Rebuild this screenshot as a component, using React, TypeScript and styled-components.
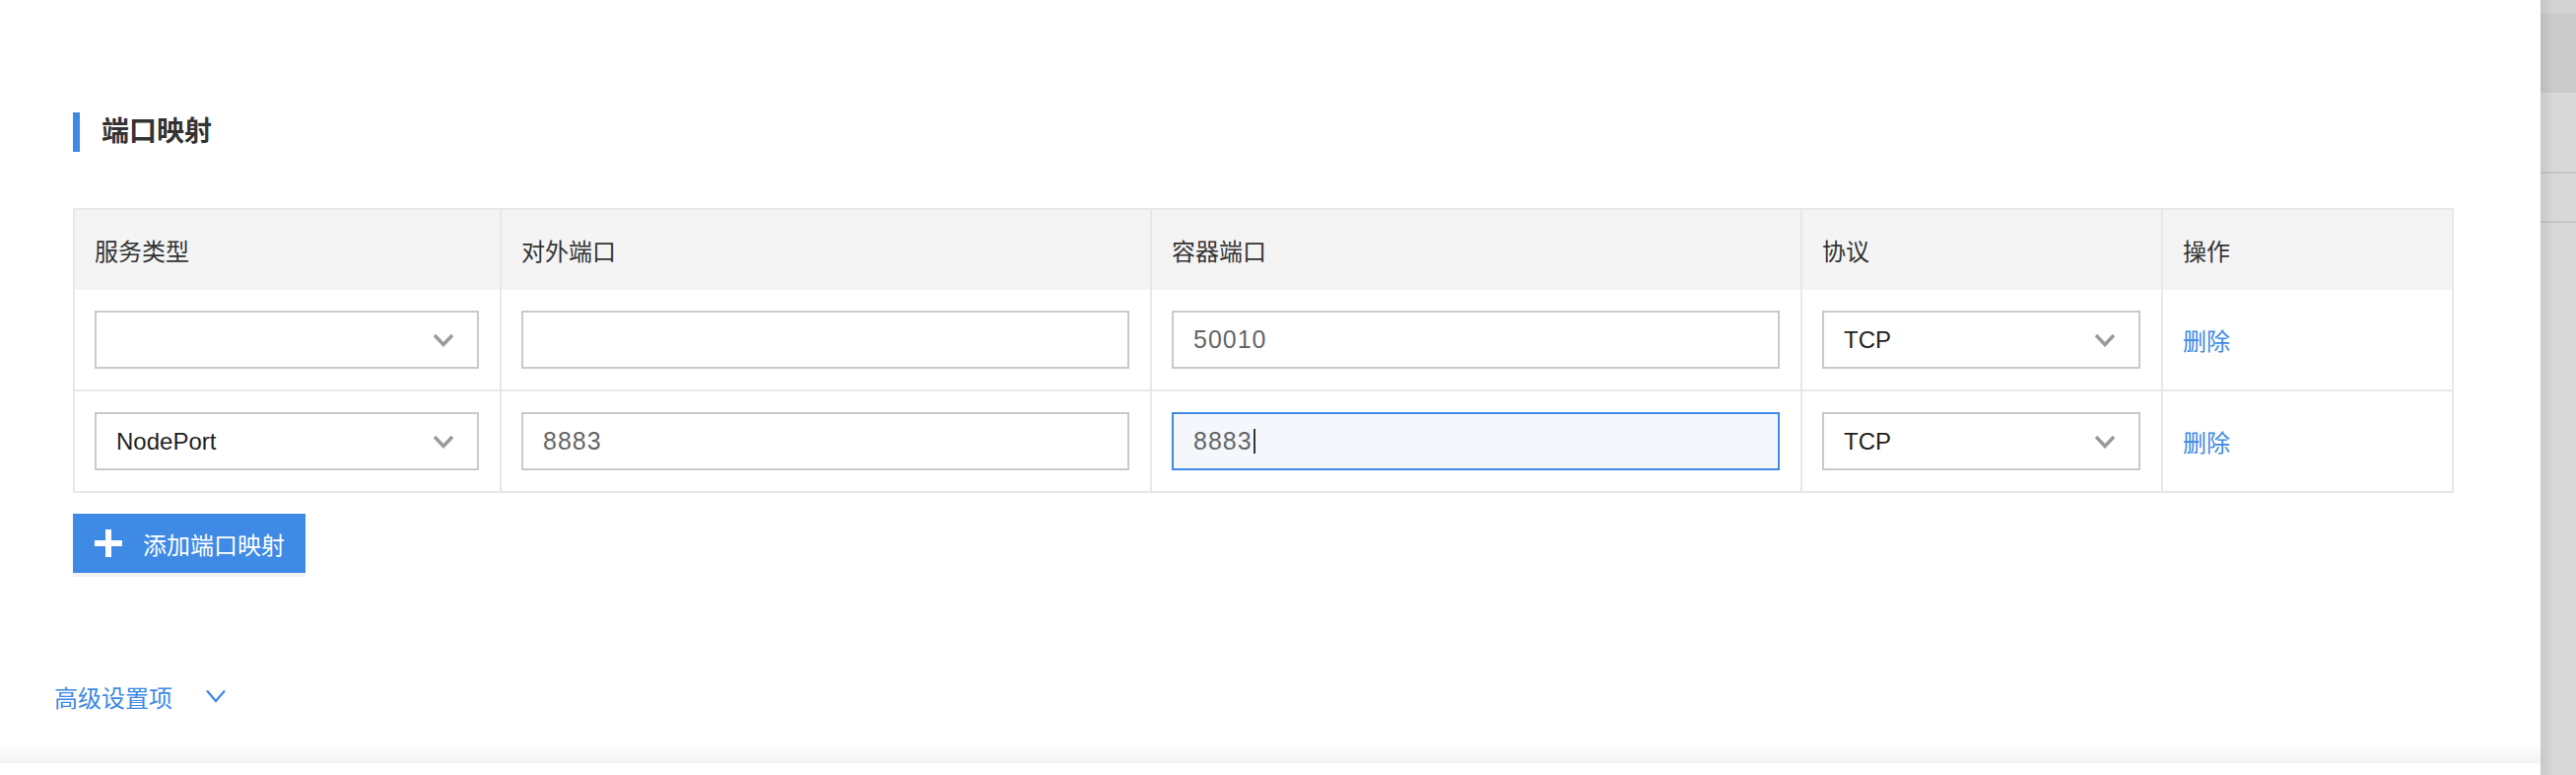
import React from 'react'
import styled, { createGlobalStyle } from 'styled-components'

const BLUE = '#3e8ae5'

const GlobalStyle = createGlobalStyle`
    html, body {
        margin: 0;
        padding: 0;
        background: #fff;
    }
    body {
        font-family: "Liberation Sans", "Noto Sans CJK SC", sans-serif;
        color: #333;
    }
`

const Screen = styled.div`
    display: flex;
    width: 2614px;
    height: 786px;
    overflow: hidden;
    background: #fff;
`

const Panel = styled.div`
    flex: 1;
    height: 774px;
    padding-top: 114px;
    box-sizing: border-box;
    display: flex;
    flex-direction: column;
    /* soft shadow at the bottom edge of the form */
    background: linear-gradient(to bottom, #fff 0, #fff 753px, #f3f3f3 774px);
`

const Section = styled.div`
    padding: 0 88px 0 74px;
`

const TitleRow = styled.div`
    display: flex;
    align-items: center;
    height: 40px;
`

const TitleBar = styled.span`
    width: 7px;
    height: 40px;
    background: ${BLUE};
`

const Title = styled.h2`
    margin: 0 0 0 22px;
    font-size: 28px;
    font-weight: 700;
    color: #333;
    line-height: 40px;
`

const Table = styled.div`
    margin-top: 57px;
    border: 2px solid #e8e8e8;
`

const Row = styled.div<{ $head?: boolean, $last?: boolean }>`
    display: grid;
    grid-template-columns: 431px 660px 660px 366px 1fr;
    background: ${props => props.$head ? '#f4f4f4' : '#fff'};
    border-bottom: ${props => props.$head || props.$last ? 'none' : '2px solid #e8e8e8'};
`

const Cell = styled.div<{ $head?: boolean }>`
    display: flex;
    align-items: center;
    height: ${props => props.$head ? '81px' : '101px'};
    padding: 0 21px 0 20px;
    box-sizing: border-box;
    font-size: 24px;
    color: #333;

    & + & {
        border-left: 2px solid #e8e8e8;
    }
`

const Field = styled.div<{ $focused?: boolean, $select?: boolean }>`
    display: flex;
    align-items: center;
    width: 100%;
    height: 59px;
    box-sizing: border-box;
    padding: ${props => props.$select ? '0 23px 0 20px' : '0 20px'};
    border: 2px solid ${props => props.$focused ? BLUE : '#c9c9c9'};
    background: ${props => props.$focused ? '#f4f8fc' : '#fff'};
    font-size: ${props => props.$select ? '24px' : '25px'};
    letter-spacing: ${props => props.$select ? '0' : '1px'};
    color: ${props => props.$select ? '#1f1f1f' : '#666'};
`

const Caret = styled.span`
    width: 2px;
    height: 25px;
    margin-left: 1px;
    background: #333;
`

const SelectArrow = styled.svg`
    margin-left: auto;
    flex: none;
`

const DeleteLink = styled.a`
    font-size: 24px;
    color: #3d89e4;
    cursor: pointer;
`

const AddButton = styled.button`
    margin-top: 21px;
    display: flex;
    align-items: center;
    gap: 21px;
    width: 236px;
    height: 60px;
    padding: 0 0 0 22px;
    border: none;
    background: ${BLUE};
    box-shadow: 0 4px 0 #f2f2f2;
    color: #fff;
    font-family: inherit;
    font-size: 24px;
    cursor: pointer;
`

const Advanced = styled.div`
    display: flex;
    align-items: center;
    gap: 34px;
    height: 34px;
    margin-top: 108px;
    padding-left: 55px;
    font-size: 24px;
    color: #3d89e4;
`

const SideStrip = styled.div`
    position: relative;
    width: 36px;
    height: 786px;
    display: flex;
    flex-direction: column;

    &::after {
        content: '';
        position: absolute;
        top: 0;
        bottom: 0;
        left: 0;
        width: 14px;
        background: linear-gradient(to right, rgba(0, 0, 0, 0.07), rgba(0, 0, 0, 0));
    }
`

const Band = styled.div<{ $h?: number, $tone: string }>`
    flex: ${props => props.$h ? `0 0 ${props.$h}px` : '1'};
    background: ${props => props.$tone};
`

const Chevron = () => (
    <SelectArrow width="22" height="14" viewBox="0 0 22 14">
        <path d="M2 2 L11 11.5 L20 2" fill="none" stroke="#9a9a9a" strokeWidth="3.5" />
    </SelectArrow>
)

const PlusIcon = () => (
    <svg width="28" height="28" viewBox="0 0 28 28">
        <path d="M14 0 V28 M0 14 H28" stroke="#fff" strokeWidth="6" />
    </svg>
)

const DownIcon = () => (
    <svg width="20" height="14" viewBox="0 0 20 14">
        <path d="M1 1.5 L10 12 L19 1.5" fill="none" stroke="#3d89e4" strokeWidth="2.2" />
    </svg>
)

type PortRow = {
    service: string,
    external: string,
    container: string,
    protocol: string,
    focused?: boolean
}

const rows: PortRow[] = [
    { service: '', external: '', container: '50010', protocol: 'TCP' },
    { service: 'NodePort', external: '8883', container: '8883', protocol: 'TCP', focused: true },
]

const headers = ['服务类型', '对外端口', '容器端口', '协议', '操作']

export default function App() {
    return (
        <Screen>
            <GlobalStyle />
            <Panel>
                <Section>
                    <TitleRow>
                        <TitleBar />
                        <Title>端口映射</Title>
                    </TitleRow>

                    <Table>
                        <Row $head>
                            {headers.map(h => <Cell $head key={h}>{h}</Cell>)}
                        </Row>
                        {rows.map((r, i) => (
                            <Row key={i} $last={i === rows.length - 1}>
                                <Cell>
                                    <Field $select>{r.service}<Chevron /></Field>
                                </Cell>
                                <Cell>
                                    <Field>{r.external}</Field>
                                </Cell>
                                <Cell>
                                    <Field $focused={r.focused}>
                                        {r.container}
                                        {r.focused && <Caret />}
                                    </Field>
                                </Cell>
                                <Cell>
                                    <Field $select>{r.protocol}<Chevron /></Field>
                                </Cell>
                                <Cell>
                                    <DeleteLink>删除</DeleteLink>
                                </Cell>
                            </Row>
                        ))}
                    </Table>

                    <AddButton>
                        <PlusIcon />
                        添加端口映射
                    </AddButton>
                </Section>

                <Advanced>
                    高级设置项
                    <DownIcon />
                </Advanced>
            </Panel>

            <SideStrip>
                <Band $h={14} $tone="#d3d3d3" />
                <Band $h={80} $tone="#cbcbcb" />
                <Band $h={80} $tone="#d8d8d8" />
                <Band $h={2} $tone="#c6c6c6" />
                <Band $h={48} $tone="#d8d8d8" />
                <Band $h={2} $tone="#c6c6c6" />
                <Band $tone="#d8d8d8" />
            </SideStrip>
        </Screen>
    )
}
